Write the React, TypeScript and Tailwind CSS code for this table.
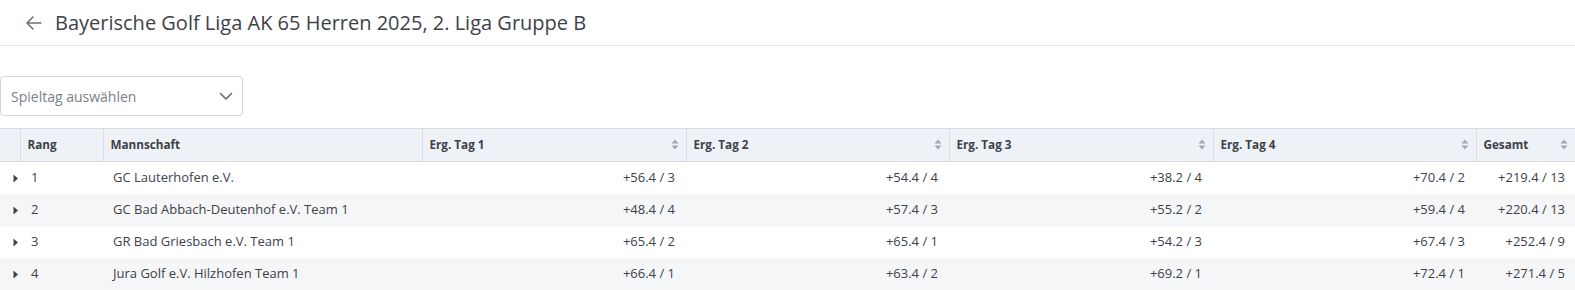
import React from "react";

const rows = [
  { rang: 1, team: "GC Lauterhofen e.V.", t: ["+56.4 / 3", "+54.4 / 4", "+38.2 / 4", "+70.4 / 2"], total: "+219.4 / 13" },
  { rang: 2, team: "GC Bad Abbach-Deutenhof e.V. Team 1", t: ["+48.4 / 4", "+57.4 / 3", "+55.2 / 2", "+59.4 / 4"], total: "+220.4 / 13" },
  { rang: 3, team: "GR Bad Griesbach e.V. Team 1", t: ["+65.4 / 2", "+65.4 / 1", "+54.2 / 3", "+67.4 / 3"], total: "+252.4 / 9" },
  { rang: 4, team: "Jura Golf e.V. Hilzhofen Team 1", t: ["+66.4 / 1", "+63.4 / 2", "+69.2 / 1", "+72.4 / 1"], total: "+271.4 / 5" },
];

const SortIcon = () => (
  <svg width="8" height="11" viewBox="0 0 8 11" className="shrink-0">
    <path d="M4 0.5 L7.5 4.5 H0.5 Z" fill="#a3a9b3" />
    <path d="M4 10.5 L7.5 6.5 H0.5 Z" fill="#a3a9b3" />
  </svg>
);

const SortHead = ({ label }: { label: string }) => (
  <th className="border-l border-[#d9dde3] px-[7px] text-left font-bold">
    <div className="flex items-center justify-between">
      <span>{label}</span>
      <SortIcon />
    </div>
  </th>
);

export default function App() {
  return (
    <div className="w-[1575px] h-[290px] overflow-hidden bg-white text-[#3d424a] font-['Open_Sans',sans-serif]">
      <div className="h-[46px] flex items-center border-b border-[#e3e6ea] pl-[25px]">
        <svg width="18" height="18" viewBox="0 0 18 18" className="mr-[12px] mt-[1px]">
          <path d="M16 9 H2 M8 3 L2 9 L8 15" stroke="#6b717b" strokeWidth="1.6" fill="none" strokeLinecap="round" strokeLinejoin="round" />
        </svg>
        <h1 className="text-[20px] text-[#3d424a]">Bayerische Golf Liga AK 65 Herren 2025, 2. Liga Gruppe B</h1>
      </div>

      <div className="pt-[30px] pb-[12px]">
        <div className="w-[243px] h-[40px] border border-[#d2d6dc] rounded-[4px] flex items-center justify-between pl-[10px] pr-[8px]">
          <span className="text-[14px] text-[#7b8089]">Spieltag auswählen</span>
          <svg width="16" height="16" viewBox="0 0 16 16">
            <path d="M2.5 5.5 L8 11 L13.5 5.5" stroke="#5f6570" strokeWidth="1.5" fill="none" strokeLinecap="round" strokeLinejoin="round" />
          </svg>
        </div>
      </div>

      <table className="table-fixed border-collapse w-[1575px]">
        <colgroup>
          <col className="w-[20px]" />
          <col className="w-[83px]" />
          <col className="w-[319px]" />
          <col className="w-[264px]" />
          <col className="w-[263px]" />
          <col className="w-[264px]" />
          <col className="w-[263px]" />
          <col className="w-[99px]" />
        </colgroup>
        <thead>
          <tr className="h-[33px] bg-[#eef1f5] text-[11.7px] border-y border-[#d9dde3]">
            <th />
            <th className="border-l border-[#d9dde3] px-[7px] text-left font-bold">Rang</th>
            <th className="border-l border-[#d9dde3] px-[7px] text-left font-bold">Mannschaft</th>
            <SortHead label="Erg. Tag 1" />
            <SortHead label="Erg. Tag 2" />
            <SortHead label="Erg. Tag 3" />
            <SortHead label="Erg. Tag 4" />
            <SortHead label="Gesamt" />
          </tr>
        </thead>
        <tbody className="text-[13px]">
          {rows.map((r, i) => (
            <tr key={r.rang} className={`h-[32px] ${i % 2 === 1 ? "bg-[#f5f6f8]" : "bg-white"}`}>
              <td className="text-right pr-[1px]">
                <svg width="6" height="9" viewBox="0 0 6 9" className="inline-block">
                  <path d="M0.5 0.5 L5 4.5 L0.5 8.5 Z" fill="#3f444c" />
                </svg>
              </td>
              <td className="pl-[11px]">{r.rang}</td>
              <td className="pl-[10px]">{r.team}</td>
              {r.t.map((v, j) => (
                <td key={j} className="text-right pr-[11px]">{v}</td>
              ))}
              <td className="text-right pr-[10px]">{r.total}</td>
            </tr>
          ))}
        </tbody>
      </table>
    </div>
  );
}
